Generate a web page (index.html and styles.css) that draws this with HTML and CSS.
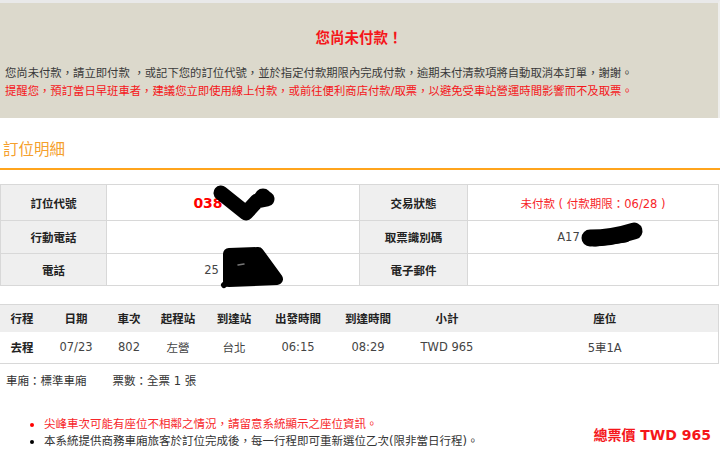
FILE: index.html
```html
<!DOCTYPE html>
<html lang="zh-Hant">
<head>
<meta charset="utf-8">
<title>訂位明細</title>
<link rel="stylesheet" href="styles.css">
</head>
<body>
<div class="page">
  <div class="banner">
    <div class="banner-title">您尚未付款！</div>
    <div class="banner-text">您尚未付款，請立即付款 ，或記下您的訂位代號，並於指定付款期限內完成付款，逾期未付清款項將自動取消本訂單，謝謝。</div>
    <div class="banner-text warn">提醒您，預訂當日早班車者，建議您立即使用線上付款，或前往便利商店付款/取票，以避免受車站營運時間影響而不及取票。</div>
  </div>

  <h2 class="section-title">訂位明細</h2>

  <table class="info">
    <colgroup>
      <col class="c-label1"><col class="c-val1"><col class="c-label2"><col class="c-val2">
    </colgroup>
    <tr class="r1">
      <th>訂位代號</th>
      <td class="code-cell"><span class="code">038</span></td>
      <th>交易狀態</th>
      <td class="status">未付款 ( 付款期限：06/28 )</td>
    </tr>
    <tr class="r2">
      <th>行動電話</th>
      <td></td>
      <th>取票識別碼</th>
      <td class="ticket-cell">A17</td>
    </tr>
    <tr class="r3">
      <th>電話</th>
      <td class="phone-cell">25</td>
      <th>電子郵件</th>
      <td></td>
    </tr>
  </table>

  <table class="trips">
    <colgroup>
      <col class="t1"><col class="t2"><col class="t3"><col class="t4"><col class="t5"><col class="t6"><col class="t7"><col class="t8"><col class="t9">
    </colgroup>
    <thead>
      <tr>
        <th>行程</th><th>日期</th><th>車次</th><th>起程站</th><th>到達站</th><th>出發時間</th><th>到達時間</th><th>小計</th><th>座位</th>
      </tr>
    </thead>
    <tbody>
      <tr>
        <td class="dir">去程</td><td>07/23</td><td>802</td><td>左營</td><td>台北</td><td>06:15</td><td>08:29</td><td>TWD 965</td><td>5車1A</td>
      </tr>
    </tbody>
  </table>

  <div class="summary"><span>車廂：標準車廂</span><span class="count">票數：全票 1 張</span></div>

  <div class="footer">
    <ul class="notes">
      <li class="red">尖峰車次可能有座位不相鄰之情況，請留意系統顯示之座位資訊。</li>
      <li>本系統提供商務車廂旅客於訂位完成後，每一行程即可重新選位乙次(限非當日行程)。</li>
    </ul>
    <div class="total">總票價 TWD 965</div>
  </div>

  <svg class="redact" width="720" height="458" viewBox="0 0 720 458" aria-hidden="true">
    <path d="M221 193 L246 213 L257 201 L267 199" fill="none" stroke="#000" stroke-width="15" stroke-linecap="round" stroke-linejoin="round"/>
    <circle cx="263" cy="197" r="8.5" fill="#000"/>
    <path d="M229 254 L258 253 L277 279 L229 281 Z" fill="#000" stroke="#000" stroke-width="12" stroke-linejoin="round"/>
    <path d="M224 285 L231 279" stroke="#000" stroke-width="6" stroke-linecap="round"/>
    <path d="M238 265 L244 264" stroke="#777" stroke-width="1.5" stroke-linecap="round"/>
    <path d="M590 238 Q612 238 634 231" fill="none" stroke="#000" stroke-width="17" stroke-linecap="round"/>
    <path d="M595 240 L625 236" fill="none" stroke="#000" stroke-width="13" stroke-linecap="round"/>
  </svg>
</div>
</body>
</html>
```
FILE: styles.css
```css
* { box-sizing: border-box; }
html, body { margin: 0; padding: 0; background: #fff; }
body {
  font-family: "DejaVu Sans", "Noto Sans CJK TC", sans-serif;
  font-size: 11.5px;
  color: #333;
  width: 720px;
  height: 458px;
  overflow: hidden;
}
.page { position: relative; width: 720px; }

.banner {
  height: 118px;
  background: #dcd9cc;
  border-top: 3px solid #e9e9e9;
  border-right: 2px solid #eeeeec;
  padding: 25px 5px 0 5px;
}
.banner-title {
  text-align: center;
  color: #f5161a;
  font-weight: bold;
  font-size: 14.5px;
  line-height: 20px;
  margin-bottom: 16px;
}
.banner-text { line-height: 18px; color: #3a3a3a; white-space: nowrap; font-size: 11.35px; }
.banner-text.warn { color: #f5161a; }

.section-title {
  margin: 22px 0 0 0;
  padding: 0 0 7px 3px;
  font-size: 15.5px;
  line-height: 21px;
  font-weight: normal;
  color: #f5a02c;
  border-bottom: 2px solid #ffa41c;
}

table { border-collapse: collapse; table-layout: fixed; width: 718px; }

.info { margin-top: 14px; }
.info .c-label1 { width: 106px; }
.info .c-val1 { width: 253px; }
.info .c-label2 { width: 108px; }
.info .c-val2 { width: 251px; }
.info th, .info td {
  border: 1px solid #d8d8d8;
  text-align: center;
  padding: 0;
}
.info th { background: #efefef; font-weight: bold; color: #222; }
.info td { background: #fff; }
.info .r1 { height: 36px; }
.info .r2 { height: 33px; }
.info .r3 { height: 32px; }
.code { color: #ff0000; font-weight: bold; font-size: 14px; }
.code-cell { padding-right: 50px !important; }
.phone-cell { padding-right: 43px !important; color: #444; }
.ticket-cell { padding-right: 49px !important; color: #444; }
.status { color: #f7262a; }

.trips { margin-top: 18px; border-top: 1px solid #d8d8d8; border-bottom: 1px solid #d8d8d8; border-right: 1px solid #d8d8d8; }
.trips .t1 { width: 44px; }
.trips .t2 { width: 64px; }
.trips .t3 { width: 42px; }
.trips .t4 { width: 56px; }
.trips .t5 { width: 56px; }
.trips .t6 { width: 72px; }
.trips .t7 { width: 68px; }
.trips .t8 { width: 90px; }
.trips .t9 { width: 226px; }
.trips th, .trips td { text-align: center; padding: 0; white-space: nowrap; }
.trips thead tr { height: 27px; background: #eeeeee; }
.trips th { font-weight: bold; color: #222; }
.trips tbody tr { height: 32px; }
.trips td { color: #444; }
.trips td.dir { font-weight: bold; color: #222; }

.summary { margin-top: 8px; padding-left: 6px; line-height: 18px; color: #333; }
.summary .count { margin-left: 26px; }

.footer {
  display: flex;
  align-items: center;
  justify-content: space-between;
  margin-top: 26px;
  padding-right: 9px;
}
.notes { margin: 0; padding: 0 0 0 44px; line-height: 17px; }
.notes li { color: #333; white-space: nowrap; }
.notes li.red { color: #f7262a; }
.notes li::marker { color: #000; }
.notes li.red::marker { color: #ff0000; }
.total { color: #f5161a; font-weight: bold; font-size: 14px; padding-top: 1px; }

.redact { position: absolute; left: 0; top: 0; pointer-events: none; }
```
